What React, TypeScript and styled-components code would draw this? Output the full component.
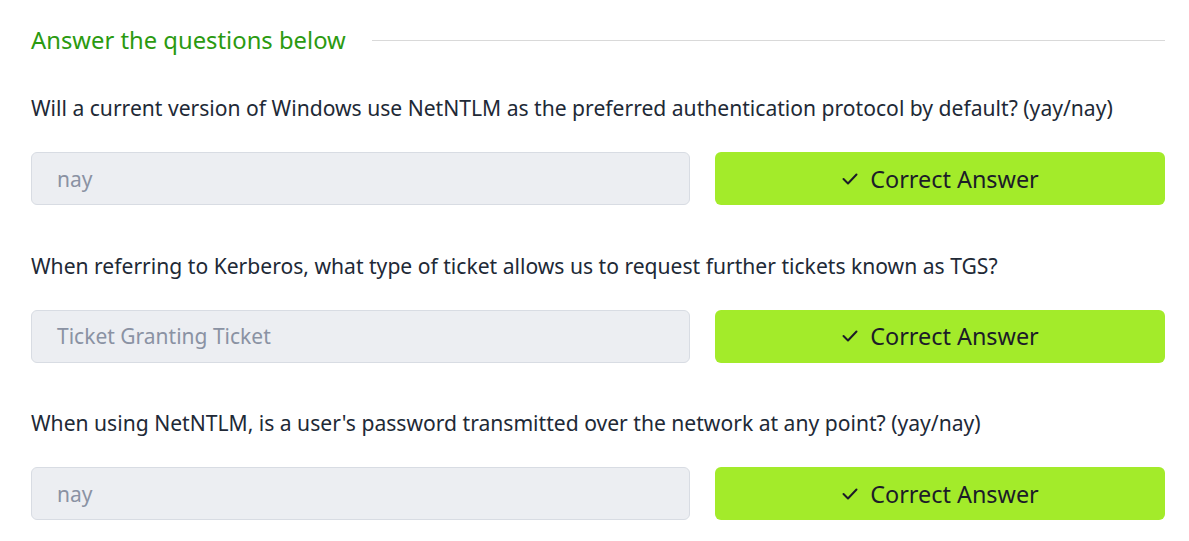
import React from "react";
import styled, { createGlobalStyle } from "styled-components";

const Global = createGlobalStyle`
  html, body { margin: 0; padding: 0; background: #ffffff; }
  body { font-family: "Noto Sans", "Open Sans", sans-serif; }
`;

const Page = styled.div`
  padding: 22px 24px 0 31px;
`;

const HeadingRow = styled.div`
  display: flex;
  align-items: center;
  gap: 26px;
  height: 36px;
`;

const Heading = styled.h2`
  margin: 0;
  font-family: "Noto Sans", sans-serif;
  font-weight: 400;
  font-size: 23.8px;
  color: #2b9a10;
  white-space: nowrap;
`;

const Rule = styled.div`
  flex: 1;
  height: 1px;
  background: #d9d9d9;
`;

const Questions = styled.div`
  display: flex;
  flex-direction: column;
  gap: 45.5px;
  margin-top: 35px;
`;

const Question = styled.div``;

const QuestionText = styled.p`
  margin: 0;
  font-family: "Noto Sans", sans-serif;
  font-size: 21.1px;
  line-height: 30px;
  color: #212936;
  white-space: nowrap;
`;

const Row = styled.div`
  display: flex;
  gap: 25px;
  margin-top: 29px;
`;

const AnswerBox = styled.div`
  flex: 0 0 659px;
  box-sizing: border-box;
  height: 53px;
  background: #eceef2;
  border: 1px solid #d8dce3;
  border-radius: 6px;
  display: flex;
  align-items: center;
  padding-left: 25px;
  font-family: "Noto Sans", sans-serif;
  font-size: 21px;
  color: #8a92a3;
`;

const Button = styled.button`
  flex: 1;
  height: 53px;
  border: none;
  border-radius: 6px;
  background: #a3eb2a;
  display: flex;
  align-items: center;
  justify-content: center;
  gap: 12px;
  font-family: "Noto Sans", sans-serif;
  font-size: 23.4px;
  color: #1c1c28;
  padding: 0 0 0 1px;
  cursor: pointer;
`;

const Check = () => (
  <svg width="16" height="12" viewBox="0 0 16 12" fill="none">
    <path d="M1.5 6 L6 10.5 L14.5 1.5" stroke="#1c1c28" strokeWidth="2" strokeLinecap="round" strokeLinejoin="round" />
  </svg>
);

const items = [
  {
    q: "Will a current version of Windows use NetNTLM as the preferred authentication protocol by default? (yay/nay)",
    a: "nay",
  },
  {
    q: "When referring to Kerberos, what type of ticket allows us to request further tickets known as TGS?",
    a: "Ticket Granting Ticket",
  },
  {
    q: "When using NetNTLM, is a user's password transmitted over the network at any point? (yay/nay)",
    a: "nay",
  },
];

export default function App() {
  return (
    <>
      <Global />
      <Page>
        <HeadingRow>
          <Heading>Answer the questions below</Heading>
          <Rule />
        </HeadingRow>
        <Questions>
          {items.map((it, i) => (
            <Question key={i}>
              <QuestionText>{it.q}</QuestionText>
              <Row>
                <AnswerBox>{it.a}</AnswerBox>
                <Button>
                  <Check />
                  Correct Answer
                </Button>
              </Row>
            </Question>
          ))}
        </Questions>
      </Page>
    </>
  );
}
